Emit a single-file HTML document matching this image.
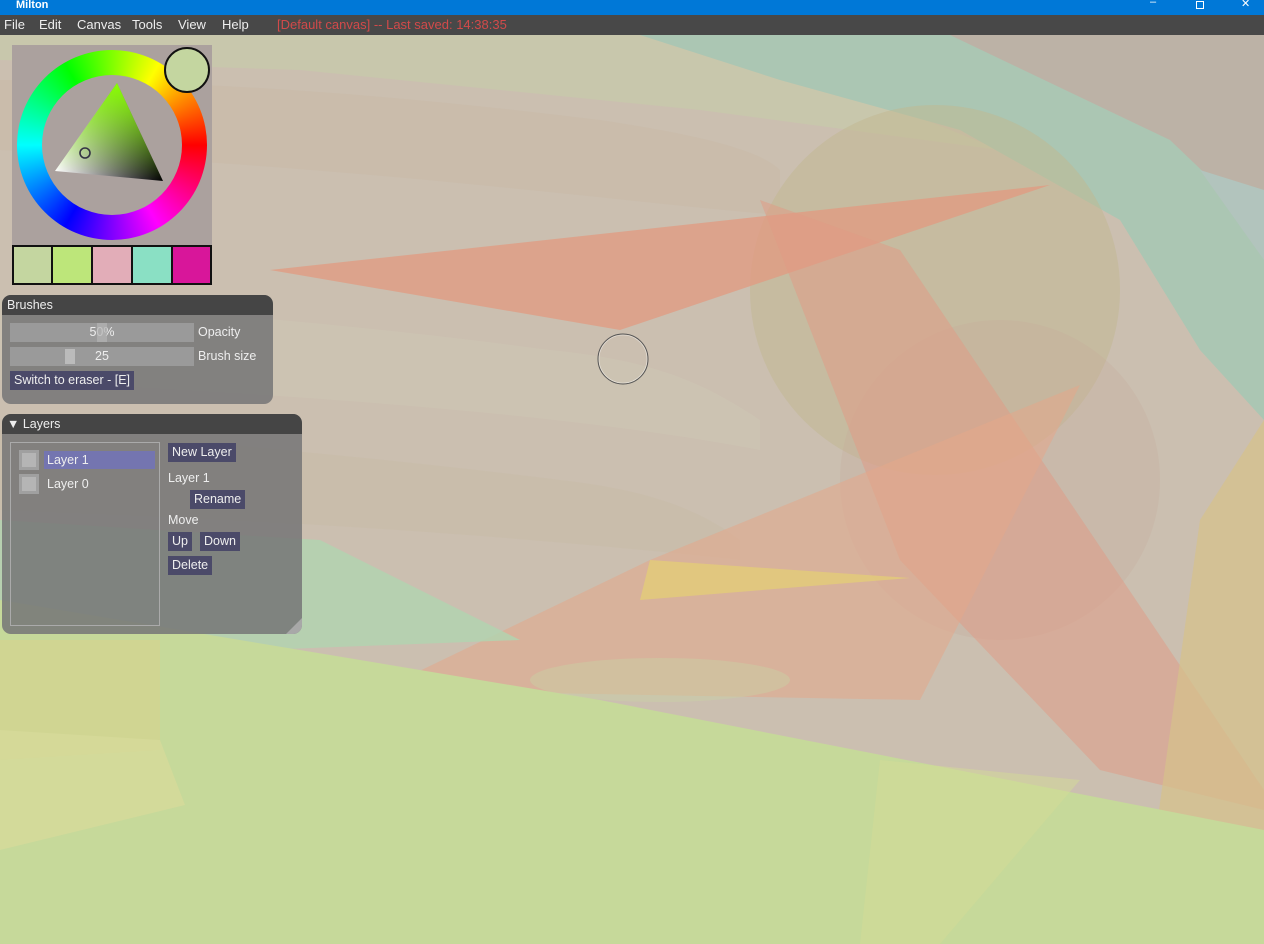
<!DOCTYPE html>
<html><head><meta charset="utf-8"><style>
*{margin:0;padding:0;box-sizing:border-box}
body{width:1264px;height:944px;overflow:hidden;position:relative;font-family:"Liberation Sans","DejaVu Sans",sans-serif;background:#cbbfb0}
#title{position:absolute;left:0;top:0;width:1264px;height:15px;background:#0078d7;color:#fff;font-size:11px;font-weight:bold;line-height:11px;padding-left:16px}
#menu{position:absolute;left:0;top:15px;width:1264px;height:20px;background:#484848;color:#eee;font-size:13px;line-height:20px}
#menu span{position:absolute;top:0}
#cv{position:absolute;left:0;top:35px}
.panel{position:absolute;background:rgba(120,120,120,0.88);border-radius:9px;color:#eee;font-size:12.5px}
.hdr{background:#454545;height:20px;line-height:20px;padding-left:5px;border-radius:9px 9px 0 0}
.btn{position:absolute;background:#4b4a69;color:#eee;height:19px;line-height:19px;padding:0 4px;font-size:12.5px}
.sl{position:absolute;background:#9a9a9a;height:19px;color:#eee;text-align:center;line-height:19px;font-size:12.5px}
.lbl{position:absolute;font-size:12.5px;color:#eee}
</style></head><body>
<svg id="cv" width="1264" height="909" viewBox="0 35 1264 909">
<rect x="0" y="35" width="1264" height="909" fill="#cbbfb0"/>
<polygon points="0,35 700,35 900,110 1000,150 700,110 300,70 0,60" fill="#c8c7ac"/>
<path d="M0,80 C200,80 400,95 600,120 C700,135 760,150 780,170 L780,215 C600,200 400,170 0,150 Z" fill="#c9bba9" opacity=".6"/>
<path d="M0,300 C200,310 400,330 550,350 C650,360 700,380 760,420 L760,450 C600,420 400,400 0,380 Z" fill="#cdc6b4" opacity=".6"/>
<path d="M0,430 C200,440 400,460 560,480 C650,490 700,510 740,540 L740,560 C560,540 300,520 0,510 Z" fill="#c8bca8" opacity=".6"/>
<polygon points="640,35 1264,35 1264,420 1200,350 1120,220 960,130 780,80" fill="#abc6b3"/>
<polygon points="950,35 1264,35 1264,230 1170,140" fill="#bcb2a6"/>
<polygon points="1200,170 1264,190 1264,260" fill="#b2c4bd"/>
<circle cx="935" cy="290" r="185" fill="#c2b890" opacity=".5"/>
<circle cx="1000" cy="480" r="160" fill="#c7ad9a" opacity=".3"/>
<polygon points="270,270 1050,185 620,330" fill="#e29a80" opacity=".75"/>
<polygon points="760,200 900,250 1264,790 1264,810 1100,770 900,560" fill="#e29a84" opacity=".5"/>
<polygon points="380,690 650,560 1080,385 920,700" fill="#e3a88a" opacity=".55"/>
<polygon points="650,560 910,578 640,600" fill="#e3cc78" opacity=".8"/>
<polygon points="1200,520 1264,420 1264,944 1140,944" fill="#d6c28a" opacity=".7"/>
<polygon points="0,520 320,540 520,640 0,660" fill="#b0d4b0" opacity=".8"/>
<polygon points="0,600 600,700 1264,830 1264,944 0,944" fill="#c6d99a"/>
<polygon points="0,640 160,640 160,750 0,760" fill="#d2d390" opacity=".8"/>
<polygon points="0,730 160,740 185,805 0,850" fill="#d6da9a" opacity=".8"/>
<polygon points="880,760 1080,780 940,944 860,944" fill="#d3dc95" opacity=".5"/>
<ellipse cx="660" cy="680" rx="130" ry="22" fill="#c9d4a5" opacity=".4"/>
<circle cx="623" cy="359" r="25" fill="none" stroke="#555" stroke-width="1"/>
<circle cx="623" cy="359" r="24" fill="none" stroke="#fff" stroke-width=".6" opacity=".6"/>
</svg>
<div id="title">Milton<span style="position:absolute;left:1150px;top:-3px;font-weight:normal">–</span><span style="position:absolute;left:1196px;top:1px;width:8px;height:8px;border:1px solid #fff"></span><span style="position:absolute;left:1241px;top:-1px;font-weight:normal">✕</span></div>
<div id="menu"><span style="left:4px">File</span><span style="left:39px">Edit</span><span style="left:77px">Canvas</span><span style="left:132px">Tools</span><span style="left:178px">View</span><span style="left:222px">Help</span><span style="left:277px;color:#d24a4a">[Default canvas] -- Last saved: 14:38:35</span></div>
<div style="position:absolute;left:12px;top:45px;width:200px;height:240px;background:#aba19e"></div>
<div style="position:absolute;left:17px;top:50px;width:190px;height:190px;border-radius:50%;background:conic-gradient(from 90deg,#f00,#f0f,#00f,#0ff,#0f0,#ff0,#f00)"></div>
<div style="position:absolute;left:42px;top:75px;width:140px;height:140px;border-radius:50%;background:#aba19e"></div>
<svg style="position:absolute;left:0;top:0" width="220" height="290">
<defs><linearGradient id="g1" x1="117" y1="83" x2="109" y2="176" gradientUnits="userSpaceOnUse"><stop offset="0" stop-color="#8f0"/><stop offset="1" stop-color="#8f0" stop-opacity="0"/></linearGradient>
<linearGradient id="g2" x1="55" y1="171" x2="163" y2="181" gradientUnits="userSpaceOnUse"><stop offset="0" stop-color="#fff"/><stop offset="1" stop-color="#000"/></linearGradient></defs>
<polygon points="117,83 55,171 163,181" fill="url(#g2)"/>
<polygon points="117,83 55,171 163,181" fill="url(#g1)"/>
<circle cx="85" cy="153" r="5" fill="none" stroke="#334" stroke-width="1.6"/>
<circle cx="187" cy="70" r="22" fill="#c4d6a0" stroke="#111" stroke-width="2"/>
<g stroke="#111" stroke-width="2">
<rect x="13" y="246" width="39" height="38" fill="#c4d6a0"/>
<rect x="52" y="246" width="40" height="38" fill="#bde67a"/>
<rect x="92" y="246" width="40" height="38" fill="#e2adb8"/>
<rect x="132" y="246" width="40" height="38" fill="#8ae0c4"/>
<rect x="172" y="246" width="39" height="38" fill="#d8169a"/>
</g></svg>
<div class="panel" style="left:2px;top:295px;width:271px;height:109px"><div class="hdr">Brushes</div>
<div class="sl" style="left:8px;top:28px;width:184px">50%<div style="position:absolute;left:87px;top:0;width:10px;height:19px;background:#b3b3b3;opacity:.7"></div></div>
<div class="lbl" style="left:196px;top:30px">Opacity</div>
<div class="sl" style="left:8px;top:52px;width:184px"><div style="position:absolute;left:55px;top:2px;width:10px;height:15px;background:#bbb"></div>25</div>
<div class="lbl" style="left:196px;top:54px">Brush size</div>
<div class="btn" style="left:8px;top:76px">Switch to eraser - [E]</div></div>
<div class="panel" style="left:2px;top:414px;width:300px;height:220px"><div class="hdr">▼ Layers</div>
<div style="position:absolute;left:8px;top:28px;width:150px;height:184px;border:1px solid #aaa"></div>
<div style="position:absolute;left:17px;top:36px;width:20px;height:20px;background:#a0a0a0"><div style="margin:3px;width:14px;height:14px;background:#b5b5b5"></div></div>
<div style="position:absolute;left:42px;top:37px;width:111px;height:18px;background:#7475b0;padding-left:3px;line-height:18px">Layer 1</div>
<div style="position:absolute;left:17px;top:60px;width:20px;height:20px;background:#a0a0a0"><div style="margin:3px;width:14px;height:14px;background:#b5b5b5"></div></div>
<div class="lbl" style="left:45px;top:63px">Layer 0</div>
<div class="btn" style="left:166px;top:29px">New Layer</div>
<div class="lbl" style="left:166px;top:57px">Layer 1</div>
<div class="btn" style="left:188px;top:76px">Rename</div>
<div class="lbl" style="left:166px;top:99px">Move</div>
<div class="btn" style="left:166px;top:118px">Up</div>
<div class="btn" style="left:198px;top:118px">Down</div>
<div class="btn" style="left:166px;top:142px">Delete</div>
<div style="position:absolute;right:0;bottom:0;width:0;height:0;border-left:16px solid transparent;border-bottom:16px solid #a8a8a8;border-bottom-right-radius:9px"></div>
</div>
</body></html>
